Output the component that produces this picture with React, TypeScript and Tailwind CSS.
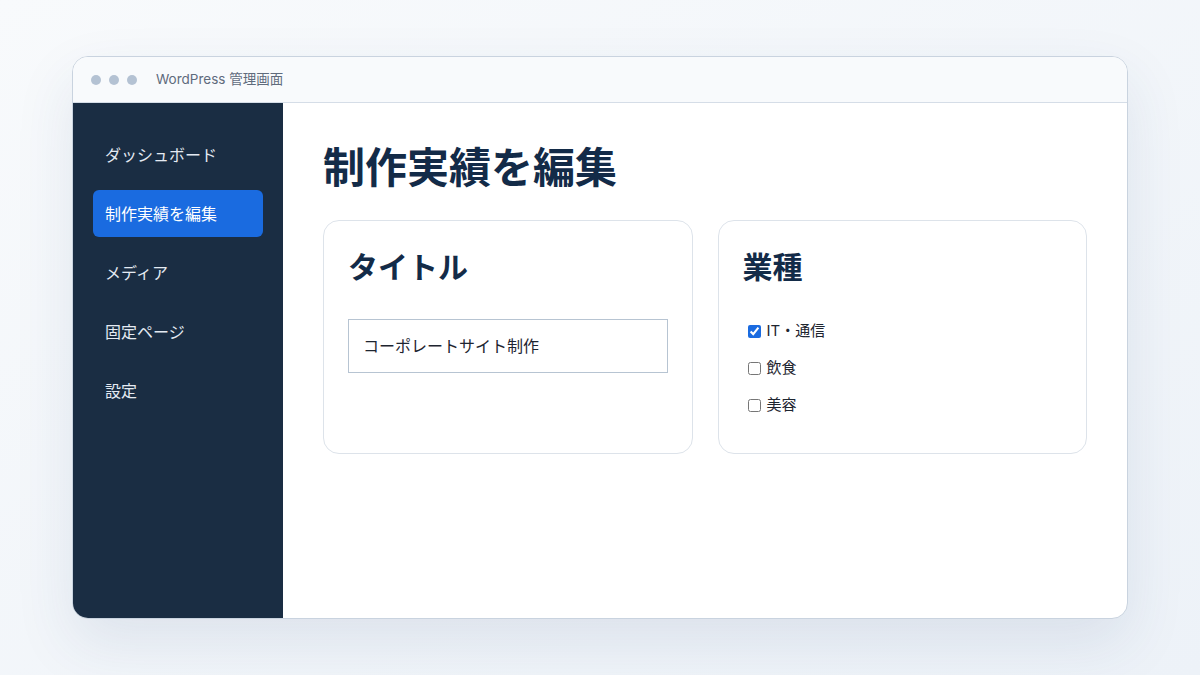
import React from "react";

const navItems = [
  { label: "ダッシュボード", active: false },
  { label: "制作実績を編集", active: true },
  { label: "メディア", active: false },
  { label: "固定ページ", active: false },
  { label: "設定", active: false },
];

const industries = [
  { label: "IT・通信", checked: true },
  { label: "飲食", checked: false },
  { label: "美容", checked: false },
];

const App: React.FC = () => {
  return (
    <div
      className="min-h-screen w-full bg-gradient-to-br from-[#f8fafc] to-[#edf2f8] flex justify-center pt-[56px]"
      style={{ fontFamily: '"Inter", "Noto Sans CJK JP", sans-serif' }}
    >
      <div className="w-[1056px] h-[563px] rounded-2xl border border-[#c9d3df] bg-white shadow-[0_24px_60px_rgba(40,70,120,0.10)] overflow-hidden flex flex-col">
        {/* Title bar */}
        <div className="h-[46px] shrink-0 bg-[#f8fafc] border-b border-[#d5dde7] flex items-center pl-[18px]">
          <div className="flex items-center gap-2">
            <span className="w-[10px] h-[10px] rounded-full bg-[#b4c2d3]" />
            <span className="w-[10px] h-[10px] rounded-full bg-[#b4c2d3]" />
            <span className="w-[10px] h-[10px] rounded-full bg-[#b4c2d3]" />
          </div>
          <span className="ml-[19px] text-[13.5px] text-[#5f6b7c]">
            WordPress 管理画面
          </span>
        </div>

        <div className="flex flex-1">
          {/* Sidebar */}
          <div className="w-[210px] shrink-0 bg-[#1a2d43] px-5 pt-7 flex flex-col gap-3">
            {navItems.map((item) => (
              <div
                key={item.label}
                className={`h-[47px] rounded-md px-3 flex items-center text-[16px] ${
                  item.active
                    ? "bg-[#1a6be0] text-white"
                    : "text-[#e4eaf2]"
                }`}
              >
                {item.label}
              </div>
            ))}
          </div>

          {/* Main */}
          <div className="flex-1 px-10 pt-10">
            <h1 className="text-[42px] leading-[1.2] font-bold text-[#132b48] mb-[27px]">
              制作実績を編集
            </h1>
            <div className="grid grid-cols-2 gap-[25px]">
              <div className="h-[234px] rounded-2xl border border-[#dde3ea] p-6">
                <h2 className="text-[30px] leading-[1.5] font-bold text-[#132b48]">
                  タイトル
                </h2>
                <div className="mt-[29px] h-[54px] border border-[#b7c4d2] px-[14px] flex items-center text-[16px] text-[#1e2530]">
                  コーポレートサイト制作
                </div>
              </div>
              <div className="h-[234px] rounded-2xl border border-[#dde3ea] p-6">
                <h2 className="text-[30px] leading-[1.5] font-bold text-[#132b48]">
                  業種
                </h2>
                <div className="mt-[30px] flex flex-col gap-[15px]">
                  {industries.map((ind) => (
                    <label
                      key={ind.label}
                      className="flex items-center h-[22px] text-[15px] text-[#1e2530]"
                    >
                      <input
                        type="checkbox"
                        defaultChecked={ind.checked}
                        className="ml-[5px] mr-[6px] w-[13px] h-[13px] accent-[#1a6be0]"
                      />
                      {ind.label}
                    </label>
                  ))}
                </div>
              </div>
            </div>
          </div>
        </div>
      </div>
    </div>
  );
};

export default App;
